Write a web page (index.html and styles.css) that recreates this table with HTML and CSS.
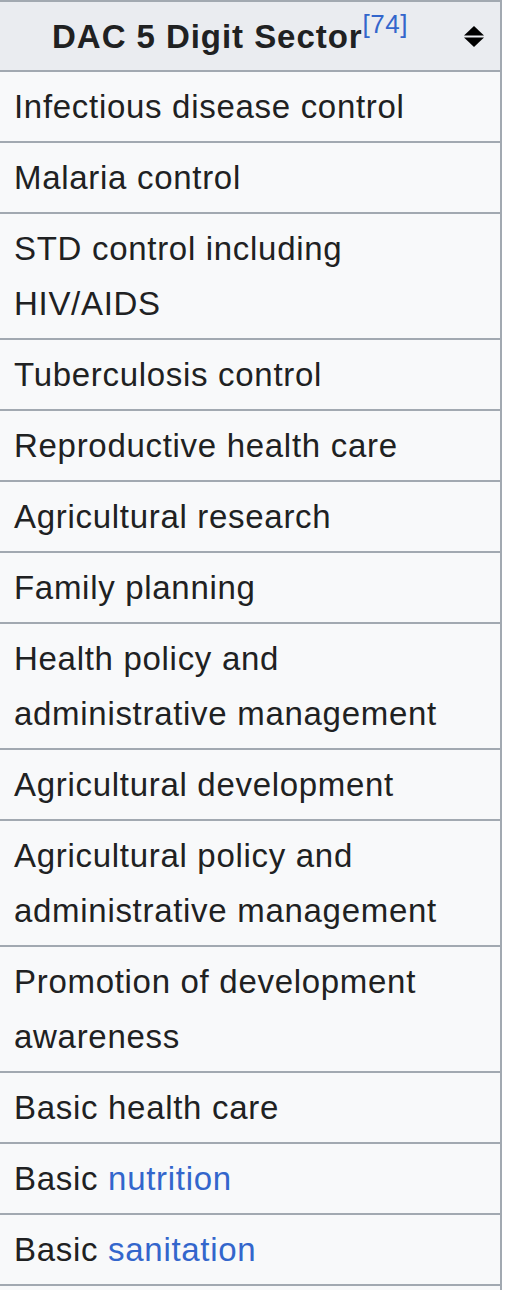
FILE: index.html
```html
<!DOCTYPE html>
<html lang="en">
<head>
<meta charset="utf-8">
<title>DAC 5 Digit Sector</title>
<link rel="stylesheet" href="styles.css">
</head>
<body>
<table class="wikitable">
  <thead>
    <tr>
      <th class="sortable">
        <div class="th-inner">
          <span class="th-label">DAC 5 Digit Sector<sup class="ref"><a href="#cite-74">[74]</a></sup></span>
          <svg class="sort-icon" width="20" height="21" viewBox="0 0 20 21" aria-hidden="true">
            <path d="M10 0 L20 9.5 L0 9.5 Z" fill="#000"/>
            <path d="M0 11.5 L20 11.5 L10 21 Z" fill="#000"/>
          </svg>
        </div>
      </th>
    </tr>
  </thead>
  <tbody>
    <tr><td>Infectious disease control</td></tr>
    <tr><td>Malaria control</td></tr>
    <tr><td>STD control including HIV/AIDS</td></tr>
    <tr><td>Tuberculosis control</td></tr>
    <tr><td>Reproductive health care</td></tr>
    <tr><td>Agricultural research</td></tr>
    <tr><td>Family planning</td></tr>
    <tr><td>Health policy and administrative management</td></tr>
    <tr><td>Agricultural development</td></tr>
    <tr><td>Agricultural policy and administrative management</td></tr>
    <tr><td>Promotion of development awareness</td></tr>
    <tr><td>Basic health care</td></tr>
    <tr><td>Basic <a href="#nutrition">nutrition</a></td></tr>
    <tr><td>Basic <a href="#sanitation">sanitation</a></td></tr>
    <tr><td>&nbsp;</td></tr>
  </tbody>
</table>
</body>
</html>
```

FILE: styles.css
```css
html, body {
  margin: 0;
  padding: 0;
  background: #ffffff;
}

body {
  font-family: "Liberation Sans", Arial, Helvetica, sans-serif;
  color: #202122;
  overflow: hidden;
}

.wikitable {
  border-collapse: collapse;
  width: 502px;
  background: #f8f9fa;
  font-size: 33px;
  letter-spacing: 0.7px;
  line-height: 55px;
}

.wikitable th,
.wikitable td {
  border-top: 2px solid #a2a9b1;
  border-bottom: 2px solid #a2a9b1;
  border-right: 2px solid #a2a9b1;
  border-left: none;
  padding: 7px 16px 7px 14px;
  text-align: left;
  vertical-align: middle;
}

.wikitable thead th {
  background: #eaecf0;
  font-weight: bold;
  letter-spacing: 0.95px;
  padding-top: 7px;
  padding-bottom: 6px;
}

.th-inner {
  display: flex;
  align-items: center;
}

.th-label {
  flex: 1;
  text-align: center;
}

.sort-icon {
  flex: none;
  margin-left: 18px;
  display: block;
}

.ref {
  font-size: 26px;
  font-weight: normal;
  line-height: 0;
  vertical-align: 15px;
  letter-spacing: 0.5px;
}

a {
  color: #3366cc;
  text-decoration: none;
}
```
